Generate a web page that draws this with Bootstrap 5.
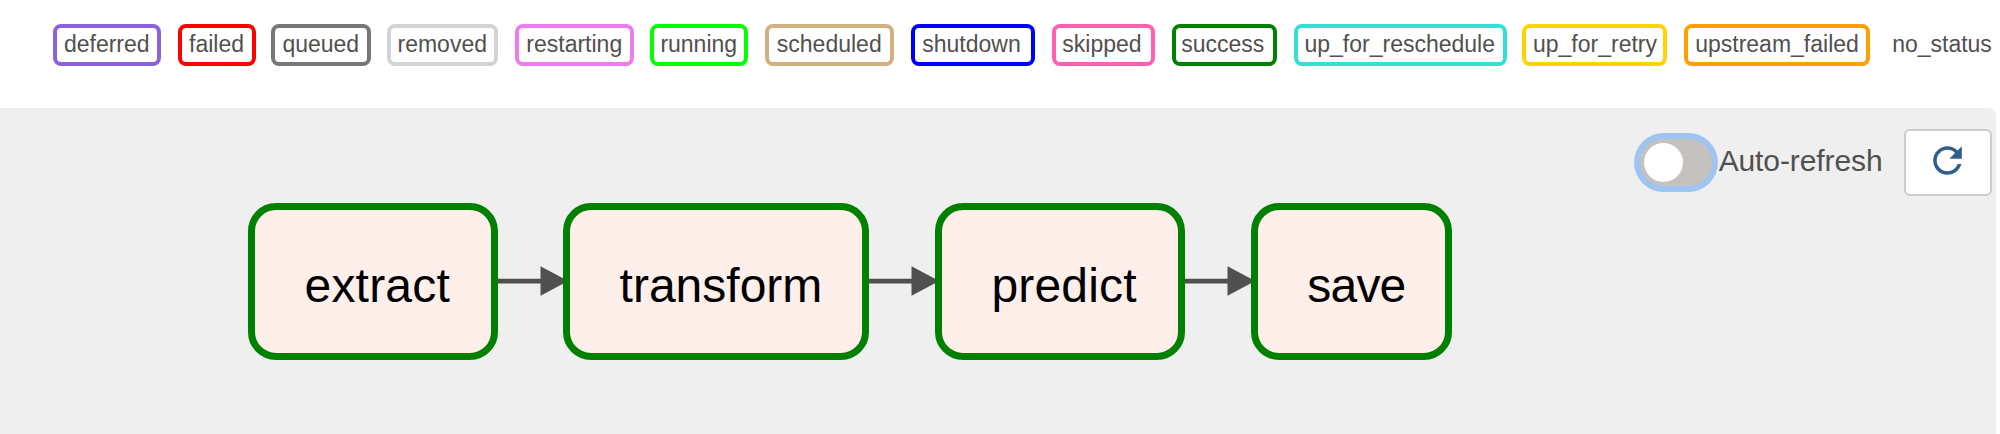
<!DOCTYPE html>
<html lang="en">
<head>
<meta charset="utf-8">
<title>DAG graph</title>
<link href="https://cdn.jsdelivr.net/npm/bootstrap@5.3.0/dist/css/bootstrap.min.css" rel="stylesheet">
<style>
body { font-family: "Liberation Sans", Arial, sans-serif; color: #51504f; background: #fff; height: 434px; }
.legend { height: 108px; padding: 24px 0 0 53px; }
.state { flex: none; width: var(--w); margin-right: var(--g, 17px); height: 42px; border: 4px solid var(--c); border-radius: 8px; font-size: 23px; line-height: 32px; text-align: center; white-space: nowrap; }
.deferred { --c: #8a63dc; --w: 107.5px; }
.failed { --c: #f00; --w: 78px; --g: 15px; }
.queued { --c: #777; --w: 100.5px; --g: 15.5px; }
.removed { --c: #d3d3d3; --w: 111.5px; --g: 16.5px; }
.restarting { --c: #ee7cee; --w: 119.5px; --g: 15.5px; }
.running { --c: #0f0; --w: 98.5px; }
.scheduled { --c: #d2b080; --w: 128.5px; }
.stopped { --c: #00f; --w: 124px; text-indent: -2px; }
.skipped { --c: #ff60b0; --w: 103px; text-indent: -2px; }
.success { --c: green; --w: 105.5px; text-indent: -3px; }
.reschedule { --c: #35e0d2; --w: 212.5px; --g: 15.5px; text-indent: -1px; }
.retry { --c: #ffd400; --w: 145px; text-indent: 1px; }
.upstream { --c: #ffa000; --w: 186px; }
.none { --c: transparent; --w: 112px; --g: 0; margin-left: -1px; }
.graph { height: 326px; width: 1995.5px; background: #efefef; border-radius: 0 8px 0 0; }
.tools { height: 94.5px; padding: 21px 4px 0 0; }
.switch { width: 72px; height: 47px; margin-top: 10px; border-radius: 24px; background: #c4c1be; box-shadow: 0 0 0 6px #a0c4f2; padding: 4px; }
.knob { width: 39px; height: 39px; background: #fff; border-radius: 50%; }
.switch-label { font-size: 30px; line-height: 34px; margin: 15px 21px 0 6.5px; letter-spacing: -.1px; }
.refresh { width: 88px; height: 67px; background: #fff; border: 2px solid #ccc; border-radius: 6px; padding: 0; }
.flow { padding-left: 248px; }
.task { height: 157px; width: var(--w); flex: none; border: 7px solid green; border-radius: 28px; background: #ffefeb; color: #000; font-size: 48px; line-height: 54px; padding: 49px 0 0 49.5px; white-space: nowrap; }
.task-wide { letter-spacing: .2px; }
.task-tight { letter-spacing: -.8px; }
.edge { flex: none; width: 65.5px; height: 32px; margin-top: 62px; overflow: hidden; }
</style>
</head>
<body class="overflow-hidden">
<div class="legend d-flex align-items-start">
  <span class="state deferred">deferred</span>
  <span class="state failed">failed</span>
  <span class="state queued">queued</span>
  <span class="state removed">removed</span>
  <span class="state restarting">restarting</span>
  <span class="state running">running</span>
  <span class="state scheduled">scheduled</span>
  <span class="state stopped">shutdown</span>
  <span class="state skipped">skipped</span>
  <span class="state success">success</span>
  <span class="state reschedule">up_for_reschedule</span>
  <span class="state retry">up_for_retry</span>
  <span class="state upstream">upstream_failed</span>
  <span class="state none">no_status</span>
</div>
<main class="graph">
  <div class="tools d-flex justify-content-end align-items-start">
    <div class="switch" role="switch" aria-checked="false"><div class="knob"></div></div>
    <span class="switch-label">Auto-refresh</span>
    <button class="btn refresh d-flex justify-content-center align-items-center" aria-label="Refresh">
      <svg width="43" height="43" viewBox="0 0 24 24" fill="#2f5f8a" style="margin-top:-4px"><path d="M17.65 6.35C16.2 4.9 14.21 4 12 4c-4.42 0-7.99 3.58-7.99 8s3.57 8 7.99 8c3.73 0 6.84-2.55 7.73-6h-2.08c-.82 2.33-3.04 4-5.65 4-3.31 0-6-2.69-6-6s2.69-6 6-6c1.66 0 3.14.69 4.22 1.78L13 11h7V4l-2.35 2.35z"/></svg>
    </button>
  </div>
  <div class="flow d-flex align-items-start">
    <div class="task task-wide" style="--w:249.6px">extract</div>
    <svg class="edge" viewBox="0 0 65.5 32" fill="#505050"><path d="M0 13.8h43v4.6H0z"/><path d="M42.5 1.3v29.4L70 16z"/></svg>
    <div class="task" style="--w:306.3px">transform</div>
    <svg class="edge" viewBox="0 0 65.5 32" fill="#505050"><path d="M0 13.8h43v4.6H0z"/><path d="M42.5 1.3v29.4L70 16z"/></svg>
    <div class="task task-wide" style="--w:250.4px">predict</div>
    <svg class="edge" viewBox="0 0 65.5 32" fill="#505050"><path d="M0 13.8h43v4.6H0z"/><path d="M42.5 1.3v29.4L70 16z"/></svg>
    <div class="task task-tight" style="--w:201.5px">save</div>
  </div>
</main>
<script src="https://cdn.jsdelivr.net/npm/bootstrap@5.3.0/dist/js/bootstrap.bundle.min.js"></script>
</body>
</html>
